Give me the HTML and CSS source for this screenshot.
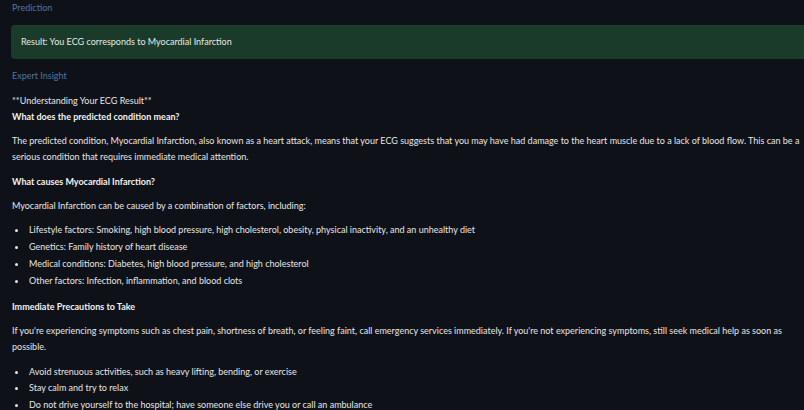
FILE: index.html
```html
<!DOCTYPE html>
<html>
<head>
<meta charset="utf-8">
<link rel="stylesheet" href="styles.css">
</head>
<body>
<main class="page">
  <div class="label">Prediction</div>
  <div class="alert">Result: You ECG corresponds to Myocardial Infarction</div>
  <div class="label">Expert Insight</div>
  <div class="md">
    <p>**Understanding Your ECG Result**<br><strong>What does the predicted condition mean?</strong></p>
    <p>The predicted condition, Myocardial Infarction, also known as a heart attack, means that your ECG suggests that you may have had damage to the heart muscle due to a lack of blood flow. This can be a serious condition that requires immediate medical attention.</p>
    <p><strong>What causes Myocardial Infarction?</strong></p>
    <p>Myocardial Infarction can be caused by a combination of factors, including:</p>
    <ul>
      <li>Lifestyle factors: Smoking, high blood pressure, high cholesterol, obesity, physical inactivity, and an unhealthy diet</li>
      <li>Genetics: Family history of heart disease</li>
      <li>Medical conditions: Diabetes, high blood pressure, and high cholesterol</li>
      <li>Other factors: Infection, inflammation, and blood clots</li>
    </ul>
    <p><strong>Immediate Precautions to Take</strong></p>
    <p>If you're experiencing symptoms such as chest pain, shortness of breath, or feeling faint, call emergency services immediately. If you're not experiencing symptoms, still seek medical help as soon as possible.</p>
    <ul>
      <li>Avoid strenuous activities, such as heavy lifting, bending, or exercise</li>
      <li>Stay calm and try to relax</li>
      <li>Do not drive yourself to the hospital; have someone else drive you or call an ambulance</li>
    </ul>
  </div>
</main>
</body>
</html>
```

FILE: styles.css
```css
html, body {
  margin: 0;
  padding: 0;
  background: #0e1117;
  overflow: hidden;
  height: 410px;
}
body {
  font-family: Lato, "Noto Sans", sans-serif;
  font-size: 9px;
  line-height: 16px;
  color: #e6e6e6;
}
.page {
  width: 805px;
  padding-left: 12px;
}
.label {
  color: #5074a0;
  height: 16px;
  margin-bottom: 9px;
}
.alert {
  margin-left: -1px;
  margin-right: -40px;
  background: #1a3a2a;
  border-top: 1px solid #1f3f2f;
  border-radius: 4px;
  padding: 8px 10px 9px;
  height: 16px;
  color: #e4ece6;
  margin-bottom: 9px;
}
.md p {
  margin: 0 0 8.3px;
}
.md strong {
  font-weight: 700;
  color: #f2f2f2;
}
.md ul {
  list-style: none;
  margin: 0 0 10.5px;
  padding: 0;
}
.md li {
  display: flex;
  height: 16px;
  margin-bottom: 0.8px;
}
.md li:last-child {
  margin-bottom: 0;
}
.md li::before {
  content: "";
  flex: 0 0 auto;
  width: 3px;
  height: 3px;
  border-radius: 50%;
  background: #e6e6e6;
  margin: 7px 11px 0 3px;
}
```
